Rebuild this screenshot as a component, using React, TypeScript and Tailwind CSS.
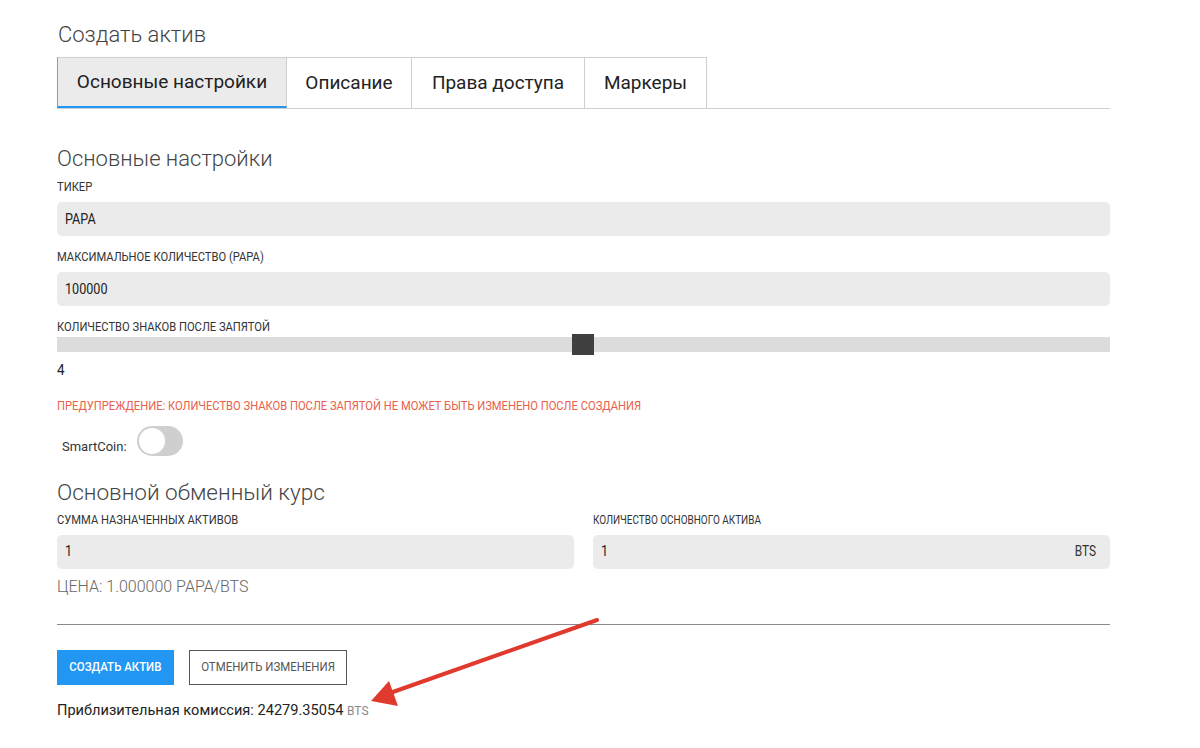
import React from 'react';

const labelCls = "block text-[13px] leading-[16px] text-[#333] uppercase whitespace-nowrap scale-x-[0.86] origin-left";
const smallLabelCls = "block text-[12px] leading-[16px] text-[#333] uppercase whitespace-nowrap scale-x-[0.83] origin-left";

const Field = ({ label, value, suffix, small }: { label: string; value: string; suffix?: string; small?: boolean }) => (
  <div>
    <label className={small ? smallLabelCls : labelCls}>{label}</label>
    <div className="mt-[7px] h-[34px] rounded-[5px] bg-[#ebebeb] flex items-center justify-between pl-2 pr-[14px]">
      <span className="text-[14px] text-[#222] scale-x-[0.9] origin-left">{value}</span>
      {suffix && <span className="text-[14px] text-[#333] scale-x-[0.85] origin-right">{suffix}</span>}
    </div>
  </div>
);

export default function App() {
  const tabs = [
    { t: "Основные настройки", w: "w-[230px]" },
    { t: "Описание", w: "w-[125px]" },
    { t: "Права доступа", w: "w-[173px]" },
    { t: "Маркеры", w: "w-[122px]" },
  ];

  return (
    <div className="relative w-[1200px] h-[748px] bg-white font-['Roboto',sans-serif] text-[#333] overflow-hidden">
      <div className="ml-[57px] w-[1053px] pt-[20px]">
        <h1 className="text-[22px] font-light text-[#444] leading-[30px] ml-[1px]">Создать актив</h1>

        {/* tabs */}
        <div className="mt-[7px] flex border-b border-[#cfcfcf]">
          {tabs.map((tab, i) => (
            <div
              key={tab.t}
              className={
                "h-[51px] flex items-center justify-center border-t border-r border-[#cfcfcf] text-[19px] text-[#222] " +
                tab.w +
                (i === 0 ? " bg-[#ebebeb] border-l border-l-[#999] border-b-2 border-b-[#2196f3] -mb-px" : "")
              }
            >
              {tab.t}
            </div>
          ))}
        </div>

        <h2 className="mt-[36px] text-[22px] font-light text-[#444] leading-[28px]">Основные настройки</h2>

        <div className="mt-[6px] flex flex-col gap-[13px]">
          <Field label="Тикер" value="PAPA" />
          <Field label="Максимальное количество (PAPA)" value="100000" />
        </div>

        <div className="mt-[13px]">
          <label className={labelCls}>Количество знаков после запятой</label>
          <div className="relative mt-[2px] h-[15px] bg-[#dcdcdc]">
            <div className="absolute left-[515px] top-[-3px] w-[22px] h-[21px] bg-[#404040]"></div>
          </div>
          <div className="mt-[8px] text-[15px] leading-[20px] text-[#222] scale-x-[0.9] origin-left">4</div>
        </div>

        <div className="mt-[18px] text-[13px] leading-[16px] text-[#e9604a] uppercase scale-x-[0.86] origin-left whitespace-nowrap">
          Предупреждение: количество знаков после запятой не может быть изменено после создания
        </div>

        <div className="mt-[11px] flex items-center gap-[10px] ml-[5px]">
          <span className="text-[13px] text-[#333] mt-[12px]">SmartCoin:</span>
          <div className="relative w-[46px] h-[30px] rounded-full bg-[#cfcfcf]">
            <div className="absolute left-[2px] top-[2px] w-[26px] h-[26px] rounded-full bg-white"></div>
          </div>
        </div>

        <h2 className="mt-[21px] text-[22.5px] font-light text-[#444] leading-[28px]">Основной обменный курс</h2>

        <div className="mt-[6px] grid grid-cols-2 gap-[19px]">
          <div>
            <Field label="Сумма назначенных активов" value="1" />
            <div className="mt-[8px] text-[16px] leading-[20px] font-light text-[#666]">ЦЕНА: 1.000000 PAPA/BTS</div>
          </div>
          <Field label="Количество основного актива" value="1" suffix="BTS" small />
        </div>

        <div className="mt-[27px] border-t border-[#8a8a8a]"></div>

        <div className="mt-[25px] flex gap-[15px]">
          <button className="h-[35px] w-[117px] bg-[#2196f3] text-white text-[13px] font-medium uppercase">
            <span className="inline-block scale-x-[0.88]">Создать актив</span>
          </button>
          <button className="h-[35px] w-[158px] border border-[#555] text-[#555] text-[13px] uppercase">
            <span className="inline-block scale-x-[0.88]">Отменить изменения</span>
          </button>
        </div>

        <div className="mt-[15px] text-[14.6px] leading-[20px] text-[#222]">
          Приблизительная комиссия: 24279.35054 <span className="text-[12px] text-[#888]">BTS</span>
        </div>
      </div>

      {/* annotation arrow */}
      <svg className="absolute left-0 top-0 pointer-events-none" width="1200" height="748">
        <line x1="597" y1="620" x2="390" y2="693" stroke="#e03a2e" strokeWidth="4" strokeLinecap="round" />
        <polygon points="371,701 389,681 398,706" fill="#e03a2e" />
      </svg>
    </div>
  );
}
